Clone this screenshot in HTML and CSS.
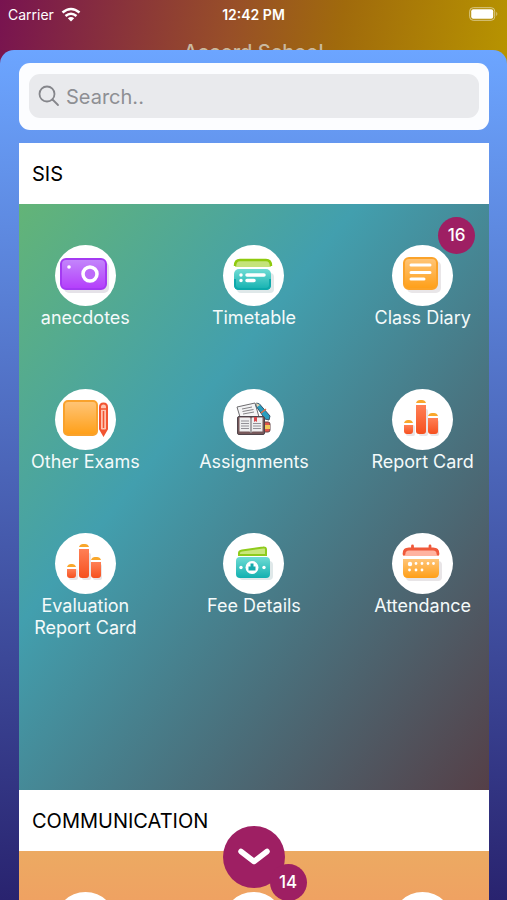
FILE: index.html
```html
<!DOCTYPE html>
<html lang="en">
<head>
<meta charset="utf-8">
<meta name="viewport" content="width=device-width, initial-scale=1">
<title>Accord School</title>
<link rel="stylesheet" href="styles.css">
</head>
<body>
<svg class="defs" aria-hidden="true">
  <defs>
    <linearGradient id="purple" x2="0" y2="1"><stop stop-color="#c387fb"/><stop offset="1" stop-color="#b43dfb"/></linearGradient>
    <linearGradient id="teal" x2="0" y2="1"><stop stop-color="#6fdcd4"/><stop offset="1" stop-color="#12b0b0"/></linearGradient>
    <linearGradient id="orange" x2="0" y2="1"><stop stop-color="#ffc578"/><stop offset="1" stop-color="#ff9f17"/></linearGradient>
    <linearGradient id="red" x2="0" y2="1"><stop stop-color="#ff8056"/><stop offset="1" stop-color="#f6501f"/></linearGradient>
    <symbol id="bars" viewBox="0 0 61 61">
      <g fill="#e9e4e6"><rect x="14" y="36" width="9" height="11" rx="2"/><rect x="27" y="20" width="9" height="27" rx="2"/><rect x="38" y="31" width="9" height="16" rx="2"/></g>
      <g fill="url(#red)"><path d="M12 36h9v6q0 3-3 3h-3q-3 0-3-3z"/><path d="M24 16h10v26q0 3-3 3h-4q-3 0-3-3z"/><path d="M36 29h10v13q0 3-3 3h-4q-3 0-3-3z"/></g>
      <g fill="#f9a72b"><path d="M12 34q1-3 4-3h1q3 0 4 3z"/><path d="M24 14q1-3 4-3h2q3 0 4 3z"/><path d="M36 27q1-3 4-3h2q3 0 4 3z"/></g>
    </symbol>
  </defs>
</svg>

<header class="top">
  <div class="status">
    <span class="carrier">Carrier
      <svg width="20" height="15" viewBox="0 0 20 15" fill="none" stroke="#fff" stroke-width="2.6" aria-hidden="true"><path d="M1.500 5.500Q10-1.500 18.500 5.500M4.500 9Q10 4.500 15.500 9"/><path d="M10 14.500L6.800 11.200Q10 8.800 13.200 11.200z" fill="#fff" stroke="none"/></svg>
    </span>
    <time class="clock">12:42 PM</time>
    <svg class="battery" width="30" height="14" viewBox="0 0 30 14" aria-hidden="true"><rect x=".7" y=".7" width="25" height="12.600" rx="3.500" fill="none" stroke="#d9c98a" stroke-width="1"/><rect x="2.200" y="2.200" width="22" height="9.600" rx="2" fill="#fff"/><path d="M27.300 4.800q2 2.200 0 4.400z" fill="#d9c98a"/></svg>
  </div>
  <h1 class="title">Accord School</h1>
</header>

<main class="sheet">
  <form class="search" role="search">
    <label class="field">
      <svg width="22" height="22" viewBox="0 0 22 22" fill="none" stroke="#85868b" stroke-width="1.800" stroke-linecap="round" aria-hidden="true"><circle cx="9" cy="9" r="7.500"/><path d="M14.500 14.500L20 20"/></svg>
      <input type="search" placeholder="Search.." aria-label="Search">
    </label>
  </form>

  <section class="group">
    <h2 class="heading">SIS</h2>
    <div class="tiles sis">
      <a class="tile" href="#anecdotes"><span class="icon"><svg viewBox="0 0 61 61" aria-hidden="true">
        <rect x="9" y="17" width="45" height="31" rx="5" fill="#e5e2e8"/>
        <rect x="6" y="14" width="45" height="30" rx="5" fill="url(#purple)" stroke="#a43af2" stroke-width="2"/>
        <circle cx="35" cy="29" r="7" fill="#bd6bfa" stroke="#fff" stroke-width="3.500"/><circle cx="14" cy="22" r="1.800" fill="#fff"/>
      </svg></span>anecdotes</a>
      <a class="tile" href="#timetable"><span class="icon"><svg viewBox="0 0 61 61" aria-hidden="true">
        <rect x="14" y="28" width="37" height="20" rx="4" fill="#dfe8e9"/>
        <path d="M12 22v-2q0-5 5-5h26q5 0 5 5v2z" fill="#c4e37a"/><path d="M12 21q0-6 5-6h26q5 0 5 6" fill="none" stroke="#8fca0e" stroke-width="2.500"/>
        <rect x="11" y="24" width="37" height="21" rx="5" fill="url(#teal)"/><path d="M12 34v6q0 4 4 4h27q4 0 4-4v-6" fill="none" stroke="#0ea9ab" stroke-width="2"/>
        <g stroke="#fff" stroke-width="3.500" stroke-linecap="round"><path d="M24 30h17M24 35.500h7M18 30h0M18 35.500h0"/></g>
      </svg></span>Timetable</a>
      <a class="tile" href="#diary"><span class="icon"><svg viewBox="0 0 61 61" aria-hidden="true">
        <rect x="15" y="16" width="34" height="32" rx="5" fill="#e9e6e8"/>
        <rect x="12" y="13" width="33" height="31" rx="5" fill="url(#orange)" stroke="#fba32a" stroke-width="2"/>
        <path d="M19 20h19M19 27.500h19M19 34h13" stroke="#fff" stroke-width="3" stroke-linecap="round"/>
      </svg><b class="badge">16</b></span>Class Diary</a>
      <a class="tile" href="#exams"><span class="icon"><svg viewBox="0 0 61 61" aria-hidden="true">
        <rect x="9" y="12" width="33" height="34" rx="4" fill="url(#orange)" stroke="#f9a22c" stroke-width="2"/>
        <path d="M45 18q0-3.500 3.500-3.500T52 18v22l-3.500 6-3.500-6z" fill="#ffc4b0" stroke="#f25532" stroke-width="2"/><path d="M45 20h7M48.500 22v17" stroke="#f25532" stroke-width="1.500"/><path d="M45.500 40.500h6l-3 5z" fill="#f25532"/>
      </svg></span>Other Exams</a>
      <a class="tile" href="#assignments"><span class="icon"><svg viewBox="0 0 61 61" aria-hidden="true">
        <path d="M14 18l18-4 4 14H17z" fill="#f4f4f5" stroke="#6e6d70"/><path d="M19 20l10-2M19.500 22.500l11-2M20 25l11-2" stroke="#858487"/>
        <path d="M33.500 14l3 1L47 27l-1 4-4-1-9-13z" fill="#299dbe" stroke="#385269"/><path d="M38 24l5-4" stroke="#e36d44" stroke-width="1.500"/><path d="M33 14l4 2-3 2z" fill="#e9d4b0"/>
        <rect x="40" y="33" width="7" height="10" rx="2" fill="#e0534b" stroke="#68484b"/><path d="M41 36h6v4h-6z" fill="#f2c958"/>
        <rect x="14.500" y="27.500" width="27" height="18" rx="1.500" fill="#77585a" stroke="#4f454b"/>
        <path d="M16.500 28.500h10l1.500 1 1.500-1h10v14h-10L28 44l-1.500-1.500h-10z" fill="#eeeeef"/><path d="M28 29v15" stroke="#615d61"/>
        <path d="M18 32h8M18 34.500h8M18 37h8M18 39.500h8M30 34.500h8M30 37h8M30 39.500h8" stroke="#939197"/><path d="M31 28h3v5l-1.500-1-1.500 1z" fill="#d9464a"/>
      </svg></span>Assignments</a>
      <a class="tile" href="#report"><span class="icon"><svg viewBox="0 0 61 61" aria-hidden="true"><use href="#bars"/></svg></span>Report Card</a>
      <a class="tile" href="#evaluation"><span class="icon"><svg viewBox="0 0 61 61" aria-hidden="true"><use href="#bars"/></svg></span>Evaluation Report Card</a>
      <a class="tile" href="#fees"><span class="icon"><svg viewBox="0 0 61 61" aria-hidden="true">
        <rect x="16" y="28" width="34" height="19" rx="4" fill="#dfe8e9"/>
        <path d="M16 22v-2q0-2 3-2.500l21-3q3-.5 3 2V22z" fill="#c9e67c" stroke="#8fcb1c" stroke-width="2"/>
        <rect x="13" y="24" width="34" height="21" rx="4" fill="url(#teal)"/>
        <circle cx="29" cy="34.500" r="6.500" fill="#fff"/><path d="M27.500 30.500h3v3h2v4h-7v-4h2z" fill="#16aaad"/><circle cx="18" cy="34.500" r="1.700" fill="#fff"/><circle cx="41" cy="34.500" r="1.700" fill="#fff"/>
      </svg></span>Fee Details</a>
      <a class="tile" href="#attendance"><span class="icon"><svg viewBox="0 0 61 61" aria-hidden="true">
        <rect x="14" y="28" width="36" height="20" rx="4" fill="#e8e5e7"/>
        <path d="M11 23v-3q0-5 5-5h26q5 0 5 5v3z" fill="#ffb3a0"/><path d="M12 21q0-5 5-5h24q5 0 5 5M20.500 16v-3M38 16v-3" fill="none" stroke="#f0593a" stroke-width="2.800" stroke-linecap="round"/>
        <path d="M11 26h36v14q0 5-5 5H16q-5 0-5-5z" fill="url(#orange)"/>
        <circle cx="18" cy="31" r="2.200" fill="#fff"/><path d="M24 30.500h0M30 30.500h0M36 30.500h0M41.500 30.500h0M17.500 37h0M24 37h0M30 37h0" stroke="#fff" stroke-width="2.800" stroke-linecap="round"/>
      </svg></span>Attendance</a>
    </div>
  </section>

  <section class="group">
    <h2 class="heading">COMMUNICATION</h2>
    <div class="tiles communication">
      <span class="tile"><span class="icon"></span></span>
      <span class="tile"><span class="icon"></span></span>
      <span class="tile"><span class="icon"></span></span>
    </div>
  </section>
</main>

<button class="collapse" type="button" aria-label="Close menu">
  <svg width="34" height="20" viewBox="0 0 34 20" fill="none" stroke="#fff" stroke-width="5.500" stroke-linecap="round" stroke-linejoin="round" aria-hidden="true"><path d="M4 4.500L17 14.500 30 4.500"/></svg>
  <b class="badge">14</b>
</button>
</body>
</html>
```
FILE: styles.css
```css
* { box-sizing: border-box; }

body {
  margin: 0;
  height: 100vh;
  overflow: hidden;
  position: relative;
  display: flex;
  flex-direction: column;
  background: linear-gradient(100deg, #781350 0, #984f28 45%, #a06a0c 66%, #b89500 100%) top / 100% 90px no-repeat #29236f;
  font-family: Inter, "Liberation Sans", sans-serif;
  color: #fff;
}

.defs { position: absolute; width: 0; height: 0; }

.top { height: 50px; flex: none; overflow: hidden; }

.status {
  height: 28px;
  padding: 0 8px;
  display: grid;
  grid-template-columns: 1fr auto 1fr;
  align-items: center;
  font-size: 14px;
}
.carrier { display: flex; align-items: center; gap: 7px; }
.clock { font-weight: 600; }
.battery { justify-self: end; }

.title {
  margin: 12px 0 0;
  font-size: 20px;
  line-height: 24px;
  font-weight: 500;
  text-align: center;
  color: #c9b9a0;
}

.sheet {
  flex: 1;
  min-height: 0;
  overflow: hidden;
  padding: 13px 18px 0 19px;
  border-radius: 14px 14px 0 0;
  background: linear-gradient(#6ca5ff, #29236f);
}

.search {
  padding: 11px 10px 12px;
  margin-bottom: 13px;
  border-radius: 11px;
  background: #fcfdff;
}
.field {
  display: flex;
  align-items: center;
  gap: 6px;
  height: 44px;
  padding: 0 9px;
  border-radius: 11px;
  background: #e9eaed;
}
.field input {
  flex: 1;
  min-width: 0;
  padding: 2px 0 0;
  border: 0;
  outline: 0;
  background: none;
  font: 20px Inter, "Liberation Sans", sans-serif;
  color: #333;
}
.field input::placeholder { color: #8e8f94; opacity: 1; }

.heading {
  margin: 0;
  padding: 1px 13px 0;
  background: #fff;
  color: #000;
  font-size: 20px;
  font-weight: 400;
  line-height: 60px;
}

.tiles {
  display: grid;
  grid-template-columns: repeat(3, 1fr);
  grid-auto-rows: 144px;
  column-gap: 36px;
  padding: 41px 0 113px;
}
.sis { background: linear-gradient(to bottom right, #63b477 0, #429fae 36%, #4a6f7b 68%, #553f47 100%); }
.communication { background: linear-gradient(#ecaa62, #f0a062 60px); }

.tile {
  display: flex;
  flex-direction: column;
  align-items: center;
  gap: 1px;
  padding: 0 8px;
  font-size: 18px;
  line-height: 22px;
  text-align: center;
  text-decoration: none;
  color: #f4fafa;
}
.icon {
  position: relative;
  flex: none;
  width: 61px;
  height: 61px;
  border-radius: 50%;
  background: #fff;
}
.icon svg { display: block; width: 100%; height: 100%; }

.badge {
  position: absolute;
  width: 37px;
  height: 37px;
  border-radius: 50%;
  background: #9e1f63;
  color: #fff;
  font-size: 17px;
  font-weight: 500;
  line-height: 37px;
  text-align: center;
}
.icon .badge { left: 46px; top: -28px; }

.collapse {
  position: absolute;
  left: 50%;
  bottom: 12px;
  transform: translateX(-50%);
  display: flex;
  align-items: center;
  justify-content: center;
  width: 62px;
  height: 62px;
  padding: 0;
  border: 0;
  border-radius: 50%;
  background: #9e1f63;
  font-family: inherit;
}
.collapse .badge { left: 47px; top: 38px; }
```
